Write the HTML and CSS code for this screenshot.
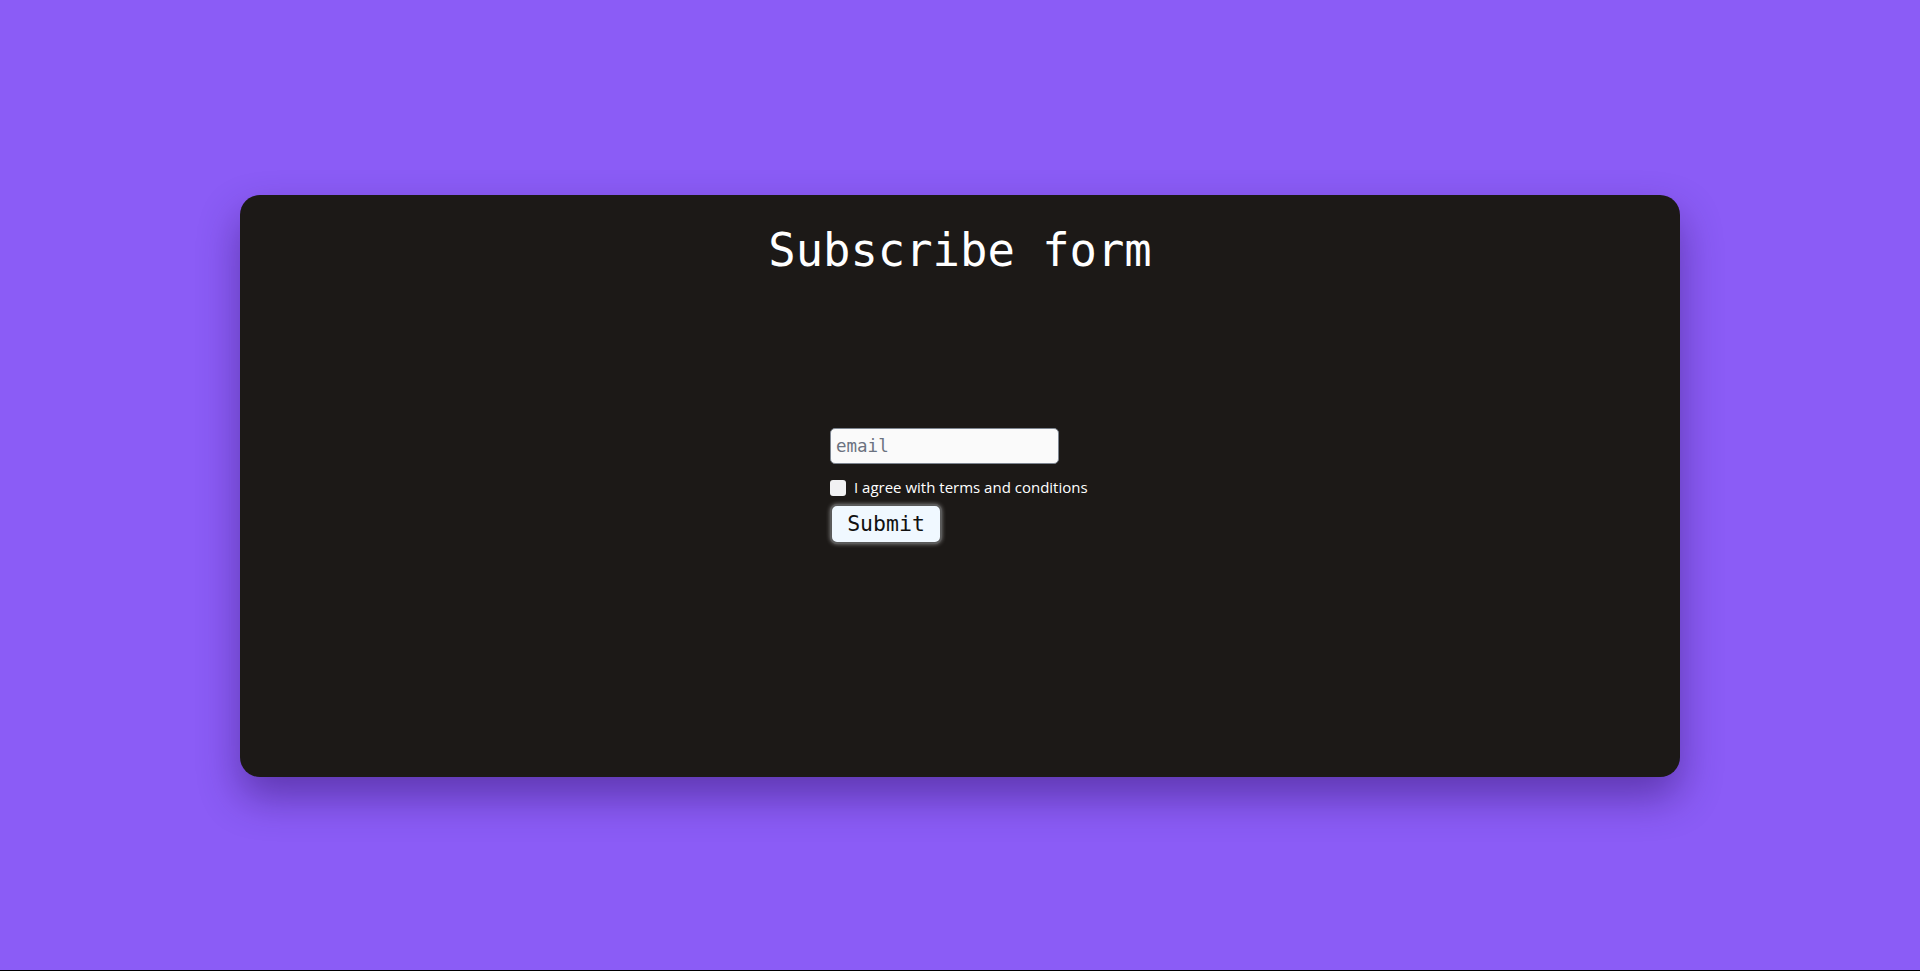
FILE: index.html
```html
<!DOCTYPE html>
<html lang="en">
<head>
<meta charset="utf-8">
<title>Subscribe form</title>
<link rel="stylesheet" href="styles.css">
</head>
<body>
<main class="page">
  <section class="card">
    <h1 class="title">Subscribe form</h1>
    <div class="form-area">
      <form class="form">
        <input class="email" type="email" placeholder="email">
        <label class="agree"><input class="check" type="checkbox"><span>I agree with terms and conditions</span></label>
        <button class="submit" type="button">Submit</button>
      </form>
    </div>
  </section>
</main>
</body>
</html>
```
FILE: styles.css
```css
html {
  background: #000;
}
body {
  margin: 0;
  height: 970px;
  background: #8b5cf6;
  font-family: "Open Sans", "Noto Sans", sans-serif;
}
.page {
  height: 100%;
  display: flex;
  align-items: center;
  justify-content: center;
}
.card {
  box-sizing: border-box;
  width: 1440px;
  height: 582px;
  margin-top: 1px;
  background: #1c1917;
  border-radius: 20px;
  box-shadow: 0 20px 40px rgba(40, 10, 90, 0.45);
  display: flex;
  flex-direction: column;
  align-items: center;
  padding: 30px 0 82px;
}
.title {
  margin: 0;
  font-family: "DejaVu Sans Mono", monospace;
  font-weight: 400;
  font-size: 45.5px;
  line-height: 52px;
  color: #fff;
}
.form-area {
  flex: 1;
  display: flex;
  align-items: center;
  justify-content: center;
  width: 100%;
}
.form {
  display: flex;
  flex-direction: column;
  align-items: flex-start;
  width: 260px;
}
.email {
  box-sizing: border-box;
  width: 229px;
  height: 36px;
  margin: 0;
  padding: 0 5px;
  border: 1px solid #7d8590;
  border-radius: 5px;
  background: #fafafa;
  font-family: "DejaVu Sans Mono", monospace;
  font-size: 17.5px;
  color: #222;
}
.email::placeholder {
  color: #6b7280;
}
.agree {
  display: flex;
  align-items: center;
  margin-top: 15px;
  color: #fff;
  font-size: 15px;
  line-height: 18px;
  white-space: nowrap;
}
.agree span {
  position: relative;
  top: -1px;
}
.check {
  appearance: none;
  -webkit-appearance: none;
  width: 16px;
  height: 16px;
  margin: 0 8px 0 0;
  border-radius: 3px;
  background: #f1f1f3;
  border: none;
}
.submit {
  box-sizing: border-box;
  margin-top: 7px;
  width: 112px;
  height: 40px;
  padding: 0;
  border: 2px solid #5a5a5a;
  border-radius: 7px;
  background: #f0f8ff;
  box-shadow: 0 0 4px rgba(255, 255, 255, 0.45);
  font-family: "DejaVu Sans Mono", monospace;
  font-size: 21.5px;
  color: #111;
}
```
